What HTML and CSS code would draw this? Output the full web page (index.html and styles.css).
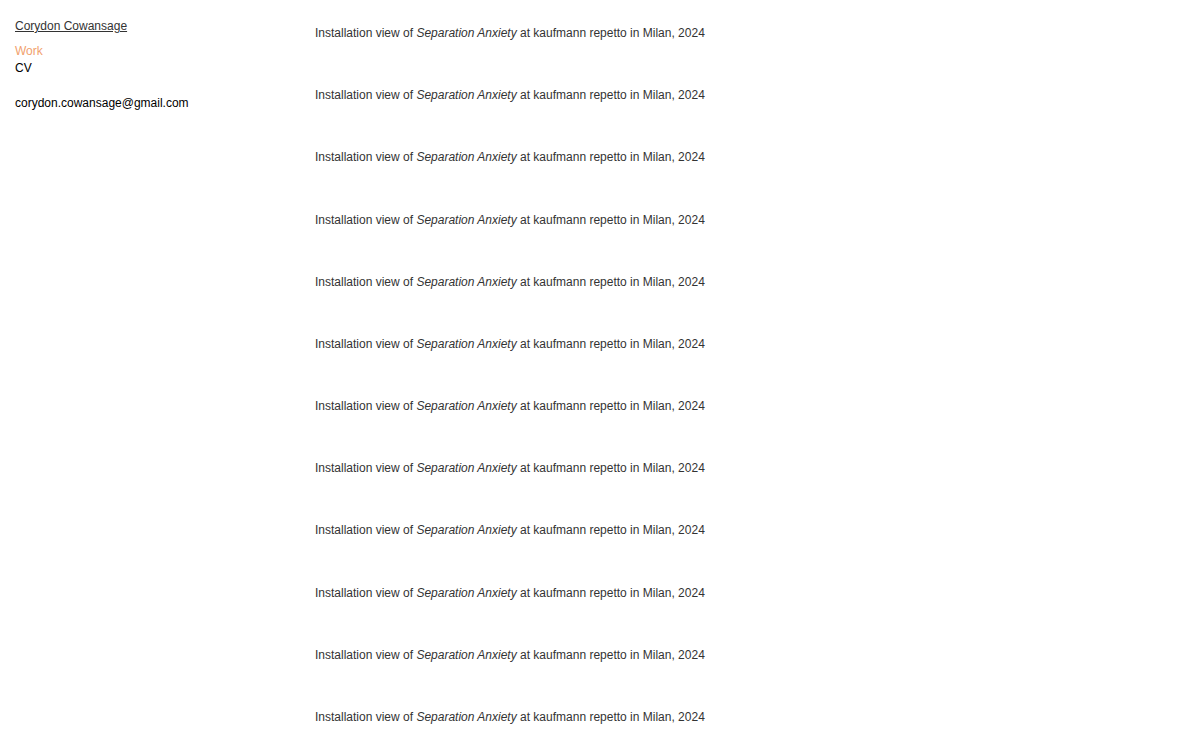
FILE: index.html
```html
<!DOCTYPE html>
<html lang="en">

<head>
    <meta charset="UTF-8" />
    <meta name="viewport" content="width=device-width, initial-scale=1.0" />
    <title>Corydon Cowansage - Work</title>
    <link rel="stylesheet" href="styles.css">
</head>

<body>
    <div class="page">
        <aside class="sidebar">
            <a class="site-name" href="#">Corydon Cowansage</a>
            <nav class="menu">
                <a class="menu-link active" href="#">Work</a>
                <a class="menu-link" href="#">CV</a>
            </nav>
            <a class="email" href="#">corydon.cowansage@gmail.com</a>
        </aside>

        <main class="works">
            <figure class="work-item"><figcaption>Installation view of <em>Separation Anxiety</em> at kaufmann repetto in Milan, 2024</figcaption></figure>
            <figure class="work-item"><figcaption>Installation view of <em>Separation Anxiety</em> at kaufmann repetto in Milan, 2024</figcaption></figure>
            <figure class="work-item"><figcaption>Installation view of <em>Separation Anxiety</em> at kaufmann repetto in Milan, 2024</figcaption></figure>
            <figure class="work-item"><figcaption>Installation view of <em>Separation Anxiety</em> at kaufmann repetto in Milan, 2024</figcaption></figure>
            <figure class="work-item"><figcaption>Installation view of <em>Separation Anxiety</em> at kaufmann repetto in Milan, 2024</figcaption></figure>
            <figure class="work-item"><figcaption>Installation view of <em>Separation Anxiety</em> at kaufmann repetto in Milan, 2024</figcaption></figure>
            <figure class="work-item"><figcaption>Installation view of <em>Separation Anxiety</em> at kaufmann repetto in Milan, 2024</figcaption></figure>
            <figure class="work-item"><figcaption>Installation view of <em>Separation Anxiety</em> at kaufmann repetto in Milan, 2024</figcaption></figure>
            <figure class="work-item"><figcaption>Installation view of <em>Separation Anxiety</em> at kaufmann repetto in Milan, 2024</figcaption></figure>
            <figure class="work-item"><figcaption>Installation view of <em>Separation Anxiety</em> at kaufmann repetto in Milan, 2024</figcaption></figure>
            <figure class="work-item"><figcaption>Installation view of <em>Separation Anxiety</em> at kaufmann repetto in Milan, 2024</figcaption></figure>
            <figure class="work-item"><figcaption>Installation view of <em>Separation Anxiety</em> at kaufmann repetto in Milan, 2024</figcaption></figure>
        </main>
    </div>
</body>

</html>
```

FILE: styles.css
```css
* {
    margin: 0;
    padding: 0;
    box-sizing: border-box;
}

html,
body {
    background: #fff;
    color: #000;
    font-family: 'Liberation Sans', Arial, sans-serif;
    font-size: 12px;
}

.page {
    display: flex;
    align-items: flex-start;
}

.sidebar {
    width: 315px;
    flex-shrink: 0;
    padding: 18px 15px 0;
    display: flex;
    flex-direction: column;
    align-items: flex-start;
    line-height: 17px;
}

.site-name {
    color: #333;
    text-decoration: underline;
}

.menu {
    margin-top: 8px;
    display: flex;
    flex-direction: column;
    align-items: flex-start;
}

.menu-link {
    color: #000;
    text-decoration: none;
}

.menu-link.active {
    color: #f19f6e;
}

.email {
    margin-top: 18px;
    color: #000;
    text-decoration: none;
}

.works {
    padding-top: 25px;
}

.work-item {
    height: 62.18px;
}

.work-item figcaption {
    color: #333;
    line-height: 17px;
}
```
